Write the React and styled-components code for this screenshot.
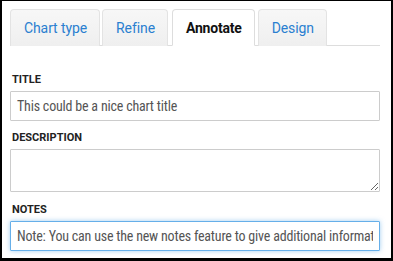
import React from "react"
import styled, { createGlobalStyle } from "styled-components"

const GlobalStyle = createGlobalStyle`
  * { box-sizing: border-box; }
  body {
    margin: 0;
    font-family: Roboto, "Liberation Sans", sans-serif;
    background: #fff;
  }
`

const Frame = styled.div`
  width: 393px;
  height: 261px;
  border-style: solid;
  border-color: #000;
  border-width: 1px 2px 3px 2px;
  padding: 8px 11px 0 8px;
  overflow: hidden;
  background: #fff;
`

const Tabs = styled.ul`
  display: flex;
  list-style: none;
  margin: 0;
  padding: 0;
  border-bottom: 1px solid #ddd;
  height: 37px;
`

const Tab = styled.li`
  height: 37px;
  margin-right: ${(p) => (p.$active ? "3px" : "2px")};
  margin-left: ${(p) => (p.$active ? "2px" : "0")};
  padding: 0 12px 0 13px;
  display: flex;
  align-items: center;
  font-size: 14px;
  letter-spacing: ${(p) => (p.$active ? "-0.2px" : "-0.1px")};
  border: 1px solid ${(p) => (p.$active ? "#ddd" : "#e3e3e3")};
  border-bottom: ${(p) => (p.$active ? "1px solid #fff" : "none")};
  border-radius: 4px 4px 0 0;
  background: ${(p) => (p.$active ? "#fff" : "linear-gradient(#f7f7f7, #efefef)")};
  color: ${(p) => (p.$active ? "#111" : "#2a7fd0")};
  font-weight: ${(p) => (p.$active ? 700 : 400)};
`

const Form = styled.div`
  display: flex;
  flex-direction: column;
  padding-top: 27px;
`

const Label = styled.label`
  font-size: 11px;
  font-weight: 700;
  color: #222;
  text-transform: uppercase;
  line-height: 14px;
  padding-left: 2px;
  margin-bottom: 4px;
`

const Field = styled.input`
  width: 370px;
  height: 30px;
  border: 1px solid ${(p) => (p.$focus ? "#66afe9" : "#ccc")};
  box-shadow: ${(p) => (p.$focus ? "0 0 5px rgba(102,175,233,0.6)" : "none")};
  border-radius: 1px;
  padding: 0 6px;
  font-family: Roboto, "Liberation Sans", sans-serif;
  font-size: 14px;
  font-stretch: 80%;
  letter-spacing: -0.2px;
  color: #555;
  outline: none;
  margin-bottom: 10px;
`

const Area = styled.textarea`
  width: 370px;
  height: 43px;
  border: 1px solid #ccc;
  border-radius: 1px;
  padding: 6px;
  font-family: Roboto, "Liberation Sans", sans-serif;
  font-size: 14px;
  outline: none;
  margin: 0 0 11px;
  display: block;
`

const App = () => {
  return (
    <>
      <GlobalStyle />
      <Frame>
        <Tabs>
          <Tab>Chart type</Tab>
          <Tab>Refine</Tab>
          <Tab $active>Annotate</Tab>
          <Tab>Design</Tab>
        </Tabs>
        <Form>
          <Label>Title</Label>
          <Field readOnly value="This could be a nice chart title" />
          <Label>Description</Label>
          <Area readOnly />
          <Label>Notes</Label>
          <Field
            $focus
            readOnly
            value="Note: You can use the new notes feature to give additional information"
          />
        </Form>
      </Frame>
    </>
  )
}

export default App
